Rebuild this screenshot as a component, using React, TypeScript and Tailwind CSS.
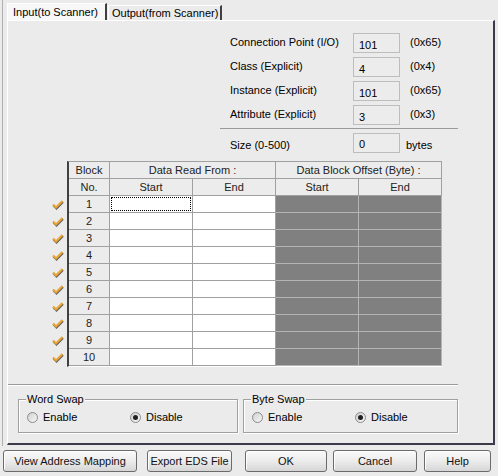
import React from 'react';

const fields = [
  { label: 'Connection Point (I/O)', value: '101', hex: '(0x65)' },
  { label: 'Class (Explicit)', value: '4', hex: '(0x4)' },
  { label: 'Instance (Explicit)', value: '101', hex: '(0x65)' },
  { label: 'Attribute (Explicit)', value: '3', hex: '(0x3)' },
];

function Check() {
  return (
    <svg width="12" height="10" viewBox="0 0 12 10">
      <path d="M1.5 5.5 L4.5 8.5 L11 2" fill="none" stroke="#5a5a5a" strokeWidth="2" />
      <path d="M1 4.5 L4 7.5 L10.5 1" fill="none" stroke="#e8a537" strokeWidth="2.2" />
    </svg>
  );
}

function Radio({ checked }: { checked?: boolean }) {
  return (
    <span className="w-[11px] h-[11px] rounded-full border border-[#8a8a8a] bg-gradient-to-br from-[#d0d0d0] to-[#f8f8f8] flex items-center justify-center">
      {checked && <span className="w-[5px] h-[5px] rounded-full bg-[#202020]" />}
    </span>
  );
}

function Group({ title, className }: { title: string; className: string }) {
  return (
    <div className={`relative h-[34px] border border-[#a0a0a0] shadow-[inset_1px_1px_0_#fff,1px_1px_0_#fff] ${className}`}>
      <span className="absolute left-[7px] -top-[8px] bg-[#ebebeb] px-px leading-[14px]">{title}</span>
      <div className="flex items-center h-full pt-[2px] pl-[8px]">
        <div className="flex items-center gap-[5px] w-[103px]">
          <Radio />
          <span>Enable</span>
        </div>
        <div className="flex items-center gap-[5px]">
          <Radio checked />
          <span>Disable</span>
        </div>
      </div>
    </div>
  );
}

function Btn({ label, className }: { label: string; className: string }) {
  return (
    <button className={`h-[22px] rounded-[3px] border border-[#6b6b6b] bg-gradient-to-b from-[#fafafa] via-[#ececec] to-[#d6d6d6] shadow-[inset_1px_1px_0_#fff] text-[#111] ${className}`}>
      {label}
    </button>
  );
}

export default function App() {
  const rows = Array.from({ length: 10 }, (_, i) => i + 1);
  return (
    <div className="w-[498px] h-[476px] bg-[#ebebeb] text-[11px] text-black overflow-hidden relative font-['Liberation_Sans',Arial,sans-serif]">
      <div className="absolute left-[2px] top-0 w-px h-[446px] bg-[#b0b0b0]" />
      {/* tabs */}
      <div className="flex items-end h-[20px] pl-[7px]">
        <div className="h-[17px] w-[100px] bg-[#f7f7f7] border-t border-l border-white border-r-2 border-r-[#404040] flex items-center pl-[5px]">
          Input(to Scanner)
        </div>
        <div className="h-[15px] w-[114px] ml-[1px] border-t border-l border-white border-r-2 border-r-[#404040] flex items-center pl-[3px]">
          Output(from Scanner)
        </div>
      </div>

      {/* panel */}
      <div className="ml-[7px] w-[488px] h-[425px] border-t border-l border-white border-r-2 border-b-2 border-r-[#3a3a4a] border-b-[#3a3a4a] flex flex-col">
        <div className="flex flex-col gap-[4px] pt-[12px] ml-[222px]">
          {fields.map((f) => (
            <div key={f.label} className="flex items-start h-[20px]">
              <span className="w-[123px] pt-[1px]">{f.label}</span>
              <div className="w-[47px] h-[20px] border border-[#bdbdbd] bg-[#ececec] pl-[5px] pt-[4px] leading-[14px]">{f.value}</div>
              <span className="ml-[10px] pt-[1px]">{f.hex}</span>
            </div>
          ))}
        </div>
        <div className="ml-[212px] mt-[3px] w-[238px] h-px bg-[#9a9a9a]" />
        <div className="flex items-start h-[20px] mt-[4px] ml-[222px]">
          <span className="w-[123px] pt-[4px]">Size (0-500)</span>
          <div className="w-[47px] h-[20px] border border-[#bdbdbd] bg-[#ececec] pl-[5px] pt-[3px] leading-[14px]">0</div>
          <span className="ml-[6px] pt-[4px]">bytes</span>
        </div>

        {/* table */}
        <div className="flex mt-[8px] ml-[44px]">
          <div className="flex flex-col w-[15px] pt-[35px]">
            {rows.map((r) => (
              <div key={r} className="h-[17px] flex items-center">
                <Check />
              </div>
            ))}
          </div>
          <div className="border-l-2 border-l-[#404040] border-t border-t-[#a0a0a0] border-b border-b-white">
            <div className="grid grid-cols-[41px_83px_83px_83px_83px] text-[#222]">
              <div className="h-[17px] bg-[#ececec] border-r border-b border-[#a0a0a0] flex items-center justify-center">Block</div>
              <div className="col-span-2 h-[17px] bg-[#ececec] border-r border-b border-[#a0a0a0] flex items-center justify-center">Data Read From :</div>
              <div className="col-span-2 h-[17px] bg-[#ececec] border-r border-b border-[#a0a0a0] flex items-center justify-center">Data Block Offset (Byte) :</div>
              <div className="h-[17px] bg-[#ececec] border-r border-b border-[#a0a0a0] flex items-center justify-center">No.</div>
              <div className="h-[17px] bg-[#ececec] border-r border-b border-[#a0a0a0] flex items-center justify-center">Start</div>
              <div className="h-[17px] bg-[#ececec] border-r border-b border-[#a0a0a0] flex items-center justify-center">End</div>
              <div className="h-[17px] bg-[#ececec] border-r border-b border-[#a0a0a0] flex items-center justify-center">Start</div>
              <div className="h-[17px] bg-[#ececec] border-r border-b border-[#a0a0a0] flex items-center justify-center">End</div>
              {rows.map((r) => (
                <React.Fragment key={r}>
                  <div className="h-[17px] bg-[#ececec] border-r border-b border-[#a0a0a0] flex items-center justify-center">{r}</div>
                  <div className="h-[17px] bg-white border-r border-b border-[#a0a0a0] p-px">
                    {r === 1 && <div className="w-full h-full border border-dotted border-black" />}
                  </div>
                  <div className="h-[17px] bg-white border-r border-b border-[#a0a0a0]" />
                  <div className="h-[17px] bg-[#808080] border-r border-b border-[#b4b4b4]" />
                  <div className="h-[17px] bg-[#808080] border-r border-b border-[#b4b4b4]" />
                </React.Fragment>
              ))}
            </div>
          </div>
        </div>

        <div className="mt-[17px] w-[450px] h-[2px] border-t border-t-[#9a9a9a] border-b border-b-white" />

        <div className="flex mt-[13px] ml-[10px]">
          <Group title="Word Swap" className="w-[220px]" />
          <Group title="Byte Swap" className="w-[215px] ml-[5px]" />
        </div>
      </div>

      {/* buttons */}
      <div className="flex mt-[5px]">
        <Btn label="View Address Mapping" className="ml-[3px] w-[134px]" />
        <Btn label="Export EDS File" className="ml-[10px] w-[85px]" />
        <Btn label="OK" className="ml-[13px] w-[82px]" />
        <Btn label="Cancel" className="ml-[6px] w-[84px]" />
        <Btn label="Help" className="ml-[7px] w-[67px]" />
      </div>
    </div>
  );
}
